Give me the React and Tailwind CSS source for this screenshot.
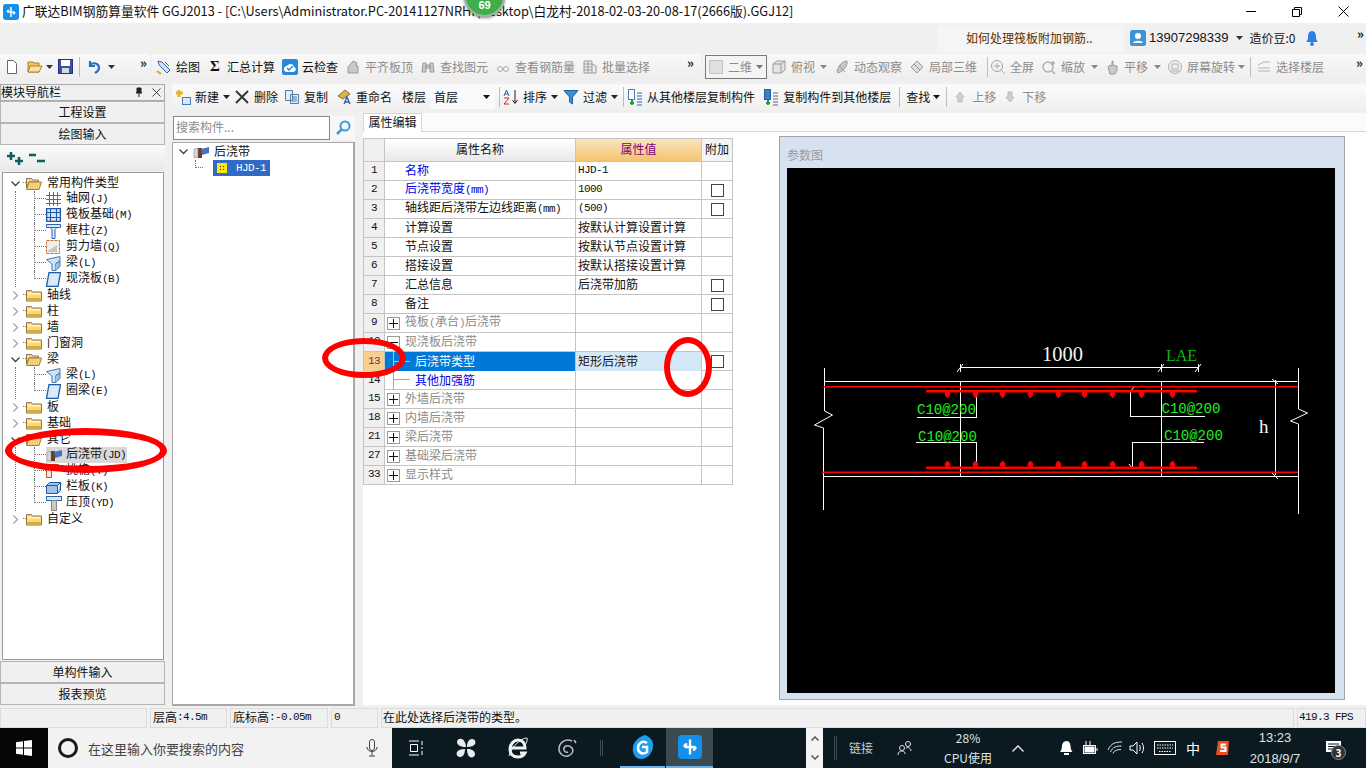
import React from 'react';

const cjk = "font-['Noto_Sans_CJK_SC','Liberation_Sans',sans-serif]";
const M = ({ children }) => <span className="font-['Liberation_Mono',monospace] text-[11px] tracking-[-0.6px]">{children}</span>;

const Arrow = ({ c = 'text-[#333]' }) => (
  <svg width="7" height="4" viewBox="0 0 7 4" className={c}><path d="M0 0h7L3.5 4z" fill="currentColor" /></svg>
);
const Gray = ({ d, fill = '#c8c8c8', stroke = '#9a9a9a' }) => (
  <svg width="16" height="16" viewBox="0 0 16 16"><path d={d} fill={fill} stroke={stroke} /></svg>
);
const ico = {
  cube: <Gray d="M2 5l4-3h8v9l-4 3H2zM2 5h8v9M10 5l4-3" fill="#e4e4e4" />,
  orbit: <Gray d="M3 12C5 6 9 2 13 2c1 4-3 10-9 12zM5 6l6 7" />,
  part: <Gray d="M2 8l6-6 6 6-6 6zM5 5l6 6M8 2l6 6" fill="#ddd" />,
  zoomAll: <svg width="16" height="16" viewBox="0 0 16 16" fill="none" stroke="#a5a5a5"><circle cx="7" cy="7" r="5.5" /><path d="M7 4v6M4 7h6M11 11l4 4" /></svg>,
  zoom: <svg width="16" height="16" viewBox="0 0 16 16" fill="none" stroke="#b0b0b0" strokeWidth="1.5"><circle cx="7" cy="8" r="5" /><path d="M11 12l3 3M12 2v4M10 4h4" /></svg>,
  pan: <Gray d="M4 8c1-2 3-2 4-1V2h1v4l4 1v4l-2 4H6z" />,
  rot: <svg width="16" height="16" viewBox="0 0 16 16" fill="#eee" stroke="#b0b0b0"><circle cx="8" cy="8" r="6.5" /><path d="M3 12h10M5 5h6v5H5z" /></svg>,
  floor: <Gray d="M2 6l6-3 6 0M2 9h12M2 12h12" fill="none" stroke="#b5b5b5" />,
  flush: <Gray d="M3 14V8l5-6 4 2-1 3h2v7z" />,
  find: <Gray d="M3 4h3v9H2zM10 4h3l1 9h-4zM6 6h4v3H6z" />,
  rebar: <svg width="16" height="16" viewBox="0 0 16 16" fill="none" stroke="#aaa"><circle cx="5" cy="10" r="2.5" /><circle cx="11" cy="10" r="2.5" /><path d="M7 10h2" /></svg>,
  batch: <Gray d="M2 2h8v12H2zM2 5h8M2 8h8M2 11h8M6 2v12M10 5l4 2v7h-4" fill="#eee" />,
};

const Tool = ({ icon, label, dis, arrow, className = '' }) => (
  <span className={`flex items-center gap-[4px] flex-none ${dis ? 'text-[#8c8c8c]' : 'text-[#111]'} ${className}`}>
    <span className="w-[16px] h-[16px] flex items-center justify-center flex-none">{icon}</span>
    <span>{label}</span>
    {arrow && <Arrow c={dis ? 'text-[#888]' : 'text-[#222]'} />}
  </span>
);
const Sep = ({ className = '' }) => <span className={`w-px h-[20px] bg-[#bdbdbd] flex-none ${className}`} />;
const More = ({ className = '' }) => <span className={`text-[13px] font-bold leading-none self-start mt-[2px] text-[#222] ${className}`}>»</span>;

const Folder = ({ open }) => (
  <svg width="16" height="13" viewBox="0 0 16 13" className="flex-none">
    {open ? (
      <>
        <path d="M.5 1.5h5l1 1.5h6v2H3L.5 11z" fill="#e9d9a8" stroke="#8b7a4a" />
        <path d="M3 5h12.5L13 12.5H.5z" fill="#f4cf78" stroke="#9b7f3a" />
      </>
    ) : (
      <>
        <path d="M.5 1.5h5l1 1.5h9v9H.5z" fill="#f6d67f" stroke="#8f7a42" />
        <path d="M1.5 4h13v1.500h-13z" fill="#fff6d0" />
        <path d="M1.500 9h13v2.500h-13z" fill="#dba73e" />
      </>
    )}
  </svg>
);
const Chev = ({ open }) => (
  <svg width="9" height="9" viewBox="0 0 9 9" fill="none" stroke={open ? '#444' : '#a6a6a6'} strokeWidth="1.4" className="flex-none">
    {open ? <path d="M.5 2.500L4.500 6.500l4-4" /> : <path d="M2.500.5l4 4-4 4" />}
  </svg>
);
const K = {
  grid: <svg width="15" height="14" viewBox="0 0 15 14" stroke="#3f6fb5" fill="none"><path d="M0 3.500h15M0 7.500h15M0 11.500h15M3.500 0v14M7.500 0v14M11.500 0v14" /></svg>,
  raft: <svg width="15" height="14" viewBox="0 0 15 14" stroke="#1f5aa8" fill="#cfe0f4"><rect x=".5" y=".5" width="14" height="13" strokeWidth="1.500" /><path d="M.5 4.500h14M.5 9.500h14M4.500.5v13M10.500.5v13" /></svg>,
  col: <svg width="15" height="15" viewBox="0 0 15 15" stroke="#2a63b0" fill="#dbe8f8"><path d="M.5.5h14v3h-14zM4 3.500l2 2v9h3v-9l2-2" /></svg>,
  wall: <svg width="15" height="14" viewBox="0 0 15 14"><rect x=".5" y=".5" width="13" height="13" fill="#f1efe9" stroke="#c9703a" strokeDasharray="3 1" /><path d="M2 11l9-6v7H2z" fill="#c9c5bd" /></svg>,
  beam: <svg width="15" height="15" viewBox="0 0 15 15" stroke="#3d78c0" fill="#cfe3f7"><path d="M.5 3.500L14 .5v4L9.500 8v6.500H6V8z" /><path d="M9.500 8L14 4.500v6l-4.500 4" fill="#9cc2ea" /></svg>,
  slab: <svg width="15" height="15" viewBox="0 0 15 15"><path d="M3 .5h11.500L12 14.500H.5z" fill="#dbe9f8" stroke="#1f5aa8" strokeWidth="1.300" /></svg>,
  jd: <svg width="16" height="14" viewBox="0 0 16 14"><path d="M5 3h4v10H5z" fill="#6b3d1e" /><path d="M1 4l4-1v9l-4 1z" fill="#d5d5d5" stroke="#888" strokeWidth=".5" /><path d="M8 4l8-2v6l-7 2z" fill="#4673bf" /></svg>,
  stair: <svg width="14" height="14" viewBox="0 0 14 14" stroke="#b4552a" fill="#f7e5d6"><path d="M.5.5h12v5h-7v8h-5z" /></svg>,
  rail: <svg width="15" height="13" viewBox="0 0 15 13" stroke="#1f5aa8" fill="#9cc4ea"><path d="M.5 4.500h11v8H.5zM.5 4.500l3-3h11l-3 3M11.500 12.500l3-3v-8" /></svg>,
  cap: <svg width="16" height="15" viewBox="0 0 16 15"><rect x=".5" y=".5" width="15" height="4" fill="#dbeafa" stroke="#2a63b0" /><rect x="5.500" y="4.500" width="5" height="10" fill="#c9c9c9" stroke="#888" /></svg>,
};

const Leaf = ({ icon, label, last, sel }) => (
  <div className="flex items-center h-[16px]">
    <span className={`w-[12px] h-[16px] flex-none border-dotted border-[#777] ${last ? '' : 'border-l'}`}>
      <span className={`block h-[8px] border-b border-dotted border-[#777] ${last ? 'border-l' : ''}`} />
    </span>
    <span className={`flex items-center h-[16px] pr-[1px] ${sel ? 'bg-[#d9d9d9]' : ''}`}>
      <span className="w-[20px] flex-none flex items-center">{icon}</span>
      <span className="whitespace-nowrap pb-[2px]">{label}</span>
    </span>
  </div>
);
const Branch = ({ label, open, children }) => (
  <>
    <div className="flex items-center h-[16px]">
      <span className="w-[10px] flex-none flex justify-center"><Chev open={open} /></span>
      <span className="w-[3px] h-[8px] mb-[8px] ml-[3px] flex-none border-b border-dotted border-[#777]" />
      <Folder open={open} />
      <span className="ml-[5px] pb-[2px]">{label}</span>
    </div>
    {children && <div className="ml-[5px] pl-[18px] border-l border-dotted border-[#777]">{children}</div>}
  </>
);

const SideBtn = ({ children }) => (
  <div className="h-[22px] flex items-center justify-center bg-[#f0f0f0] border border-[#b5b5b5] text-[#111] flex-none">{children}</div>
);

const rows = [
  { n: 1, name: '名称', blue: 1, val: <M>HJD-1</M> },
  { n: 2, name: <>后浇带宽度<M>(mm)</M></>, blue: 1, val: <M>1000</M>, c: 1 },
  { n: 3, name: <>轴线距后浇带左边线距离<M>(mm)</M></>, val: <M>(500)</M>, c: 1 },
  { n: 4, name: '计算设置', val: '按默认计算设置计算' },
  { n: 5, name: '节点设置', val: '按默认节点设置计算' },
  { n: 6, name: '搭接设置', val: '按默认搭接设置计算' },
  { n: 7, name: '汇总信息', val: '后浇带加筋', c: 1 },
  { n: 8, name: '备注', val: '', c: 1 },
  { n: 9, name: <>筏板<M>(</M>承台<M>)</M>后浇带</>, plus: '+' },
  { n: 10, name: '现浇板后浇带', plus: '-' },
  { n: 13, name: '后浇带类型', sel: 1, val: '矩形后浇带', c: 1, tree: 1 },
  { n: 14, name: '其他加强筋', blue: 1, tree: 2 },
  { n: 15, name: '外墙后浇带', plus: '+' },
  { n: 18, name: '内墙后浇带', plus: '+' },
  { n: 21, name: '梁后浇带', plus: '+' },
  { n: 27, name: '基础梁后浇带', plus: '+' },
  { n: 33, name: '显示样式', plus: '+' },
];

const Box = ({ s }) => (
  <span className="w-[13px] h-[13px] border border-[#999] bg-white flex items-center justify-center flex-none">
    <svg width="9" height="9" viewBox="0 0 9 9" stroke="#111"><path d={s === '+' ? 'M0 4.500h9M4.500 0v9' : 'M0 4.500h9'} /></svg>
  </span>
);
const Check = () => <span className="block w-[13px] h-[13px] border border-[#444] bg-white mx-auto" />;

const Row = ({ r }) => (
  <div className="grid grid-cols-[21px_191px_126px_31px] h-[19px] border-b border-[#c4c4c4]">
    <div className={`flex items-center justify-center border-r border-[#c4c4c4] pb-[1px] ${r.sel ? 'bg-[#f9cf8f] text-[#7a1f6a]' : 'bg-[#f0f0f0]'}`}><M>{r.n}</M></div>
    <div className={`flex items-center border-r border-[#c4c4c4] ${r.sel ? 'bg-[#0078d7] text-white' : r.blue ? 'text-[#0000e6]' : r.plus ? 'text-[#8c8c8c]' : 'text-[#111]'} ${r.plus ? 'pl-[2px]' : r.tree ? 'pl-[8px]' : 'pl-[20px]'}`}>
      {r.plus && <span className="mr-[5px] flex-none"><Box s={r.plus} /></span>}
      {r.tree && (
        <span className={`w-[22px] h-[19px] flex-none border-l ${r.sel ? 'border-[#9cc8ee]' : 'border-[#aaa]'} ${r.tree === 2 ? 'h-[10px] self-start' : ''}`}>
          <span className={`block border-b ${r.sel ? 'h-[10px] border-[#9cc8ee]' : 'h-[9px] border-[#aaa]'} w-[16px]`} />
        </span>
      )}
      <span className="whitespace-nowrap pb-[2px]">{r.name}</span>
    </div>
    <div className={`flex items-center pl-[2px] pb-[2px] border-r border-[#c4c4c4] whitespace-nowrap ${r.sel ? 'bg-[#d5e8f8]' : ''}`}>{r.val}</div>
    <div className="flex items-center border-r border-[#c4c4c4]">{r.c && <Check />}</div>
  </div>
);

const Dia = () => {
  const tx = [947.5, 975.5, 1002.7, 1030.4, 1058.4, 1084.5, 1112.5, 1141.6, 1172.5];
  const g = "'Liberation Mono',monospace";
  return (
    <svg viewBox="787 168 548 525" width="548" height="525" className="block">
      <g stroke="#fff" fill="none" strokeWidth="1" shapeRendering="crispEdges">
        <path d="M824.500 368V411l8 4-18 10 9 3V510" shapeRendering="auto" />
        <path d="M1298.500 368V409l9 4-17 8 8 3V514" shapeRendering="auto" />
        <path d="M824 381.500H1297M824 476.500H1298M960.500 381V476M1161 381V476M1275.500 380V475" />
        <path d="M960 367.500H1198M960.500 364V372M1161 364V372M1198 364V372" />
        <path d="M976.500 394V417.500H917M916 442.500H976.500V465M1130.500 392V416.500H1205M1204 442.500H1132.500V468" />
      </g>
      <g stroke="#fff" strokeWidth="1" fill="none">
        <path d="M957 372l6-8M1158 372l6-8M1195 372l6-8M1272 379l6 5M1272 473l6 6M1130 392l4-5M1129 464l4 5" />
      </g>
      <g fill="#f00" stroke="none">
        <rect x="824" y="386" width="474" height="1.500" />
        <rect x="822" y="471.500" width="476" height="1.500" />
        <rect x="926" y="390" width="271" height="2.500" />
        <rect x="926" y="466.500" width="271" height="2.500" />
        {tx.map((x) => <g key={x}><circle cx={x} cy="394" r="2.800" /><rect x={x - 1} y="390" width="2" height="8" /></g>)}
        {tx.map((x) => <g key={x + 'b'}><circle cx={x} cy="464.500" r="2.800" /><rect x={x - 1} y="461" width="2" height="8" /></g>)}
      </g>
      <g fontFamily={g} fontSize="14" fill="#1ff01f">
        <text x="917" y="414">C10@200</text>
        <text x="918" y="441">C10@200</text>
        <text x="1161.500" y="413">C10@200</text>
        <text x="1164" y="440">C10@200</text>
      </g>
      <text x="1042" y="361" fontFamily="'Liberation Serif',serif" fontSize="20.500" fill="#f4f4f4">1000</text>
      <text x="1166" y="361" fontFamily="'Liberation Serif',serif" fontSize="16" fill="#0fb80f">LAE</text>
      <text x="1259" y="433" fontFamily="'Liberation Serif',serif" fontSize="19" fill="#f4f4f4">h</text>
    </svg>
  );
};

const Task = ({ children, className = '' }) => <span className={`flex items-center justify-center flex-none ${className}`}>{children}</span>;
const Glodon = ({ size = 26 }) => (
  <svg width={size} height={size} viewBox="0 0 26 26">
    <rect width="26" height="26" rx="4" fill="#1590ea" />
    <path d="M13 5v16M7 13h12M7 13a3 3 0 0 1 3-3M19 13a3 3 0 0 1-3 3" stroke="#fff" strokeWidth="2.500" fill="none" />
  </svg>
);

export default function App() {
  return (
    <div className={`relative w-[1366px] h-[768px] overflow-hidden flex flex-col bg-[#f0f0f0] text-[12px] leading-none text-[#111] ${cjk}`}>
      {/* title bar */}
      <div className="h-[23px] flex-none bg-white flex items-center pl-[3px]">
        <Glodon size={16} />
        <span className="ml-[3px] text-[12.75px] whitespace-nowrap">广联达BIM钢筋算量软件 GGJ2013 - [C:\Users\Administrator.PC-20141127NRHI\Desktop\白龙村-2018-02-03-20-08-17(2666版).GGJ12]</span>
        <span className="ml-auto flex items-center">
          <span className="w-[46px] flex justify-center"><span className="w-[10px] h-px bg-black" /></span>
          <span className="w-[46px] flex justify-center">
            <svg width="10" height="10" viewBox="0 0 10 10" fill="none" stroke="#000"><path d="M.5 2.500h7v7h-7zM2.500 2.500v-2h7v7h-2" /></svg>
          </span>
          <span className="w-[46px] flex justify-center">
            <svg width="11" height="11" viewBox="0 0 11 11" stroke="#000"><path d="M.5.5l10 10M10.500.5l-10 10" /></svg>
          </span>
        </span>
      </div>

      {/* help strip */}
      <div className="h-[31px] flex-none flex items-center">
        <div className="ml-[937px] w-[187px] h-[28px] bg-[#f5f5f5] rounded-t-[3px] flex items-center pl-[29px] pb-[2px] text-[#5a3000] whitespace-nowrap">如何处理筏板附加钢筋..</div>
        <div className="ml-[6px] flex items-center pb-[2px]">
          <svg width="16" height="16" viewBox="0 0 16 16"><rect width="16" height="16" rx="2.500" fill="#3d93d6" /><circle cx="8" cy="6" r="3" fill="#fff" /><path d="M3 13c1-3 9-3 10 0z" fill="#fff" /></svg>
          <span className="ml-[3px] text-[13px] font-['Liberation_Sans',sans-serif]">13907298339</span>
          <span className="ml-[7px]"><Arrow /></span>
          <span className="ml-[7px]">造价豆:0</span>
          <svg width="14" height="16" viewBox="0 0 14 16" className="ml-[9px]"><path d="M7 1c3 0 4 3 4 6s1 4 2 5H1c1-1 2-2 2-5s1-6 4-6z" fill="#2d7fe0" /><circle cx="7" cy="14" r="2" fill="#2d7fe0" /></svg>
        </div>
        <span className="ml-auto mr-[2px] mb-[10px] text-[13px] font-bold">»</span>
      </div>

      {/* main toolbar */}
      <div className="h-[27px] flex-none flex items-center gap-[2px]">
        <div className="w-[150px] h-full rounded-[3px] bg-gradient-to-b from-[#f9f9f9] to-[#ededed] flex items-center pl-[5px] pb-[2px]">
          <svg width="14" height="16" viewBox="0 0 14 16"><path d="M2.500 1.500h6l3 3v10h-9z" fill="#fff" stroke="#666" /></svg>
          <svg width="16" height="15" viewBox="0 0 16 15" className="ml-[8px]"><path d="M1 3h5l1 1h5v9H1z" fill="#f3c55c" stroke="#a5802c" /><path d="M3 7h12l-3 6H1z" fill="#fbe29d" stroke="#a5802c" /></svg>
          <span className="ml-[3px]"><Arrow /></span>
          <svg width="15" height="15" viewBox="0 0 15 15" className="ml-[5px]"><rect x=".5" y=".5" width="14" height="14" fill="#3d4fa8" stroke="#223080" /><rect x="3" y="1" width="9" height="6" fill="#fff" /><rect x="4" y="9" width="7" height="5" fill="#cdd" /></svg>
          <Sep className="ml-[6px]" />
          <svg width="15" height="15" viewBox="0 0 15 15" fill="none" stroke="#2a6fc5" strokeWidth="2.200" className="ml-[7px]"><path d="M3 2v5h5M3 6c3-3 9-2 9 3 0 2-2 4-4 5" /></svg>
          <span className="ml-[6px]"><Arrow /></span>
          <More className="ml-[25px]" />
        </div>
        <div className="w-[549px] h-full rounded-[3px] bg-gradient-to-b from-[#f9f9f9] to-[#ededed] flex items-center pl-[4px] gap-[7px] pb-[2px]">
          <Tool label="绘图" icon={<svg width="16" height="16" viewBox="0 0 16 16" fill="#cfe0f2" stroke="#3a67a8"><path d="M2 2l4 1 8 8-3 3-8-8zM9 3l4 4" /><path d="M1 12l4 3" stroke="#e2a431" strokeWidth="2" /></svg>} />
          <Tool label="汇总计算" icon={<span className="font-['Liberation_Serif',serif] font-bold text-[15px]">Σ</span>} />
          <Tool label="云检查" icon={<svg width="16" height="16" viewBox="0 0 16 16"><rect width="16" height="16" rx="2" fill="#2a87d8" /><path d="M2 10c0-3 3-3 4-4 2-2 6-1 6 2 3 1 2 5-1 5H5c-2 0-3-1-3-3z" fill="#fff" /><path d="M5 9l2 2 4-4" stroke="#2a87d8" strokeWidth="1.500" fill="none" /></svg>} />
          <Tool dis label="平齐板顶" icon={ico.flush} />
          <Tool dis label="查找图元" icon={ico.find} />
          <Tool dis label="查看钢筋量" icon={ico.rebar} />
          <Tool dis label="批量选择" icon={ico.batch} />
          <More className="ml-[30px]" />
        </div>
        <div className="flex-1 h-full rounded-[3px] bg-gradient-to-b from-[#f9f9f9] to-[#ededed] flex items-center pl-[2px] pb-[2px]">
          <span className="w-[62px] h-[24px] border border-[#777] bg-[#f4f4f4] flex items-center text-[#8c8c8c] flex-none">
            <span className="ml-[3px] w-[14px] h-[14px] bg-[#e0e0e0] border border-[#c2c2c2]" />
            <span className="ml-[5px]">二维</span>
            <span className="ml-auto mr-[3px]"><Arrow c="text-[#777]" /></span>
          </span>
          <Tool dis className="ml-[4px]" label="俯视" icon={ico.cube} />
          <span className="ml-[5px]"><Arrow c="text-[#888]" /></span>
          <Tool dis className="ml-[7px]" label="动态观察" icon={ico.orbit} />
          <Tool dis className="ml-[7px]" label="局部三维" icon={ico.part} />
          <Sep className="ml-[10px]" />
          <Tool dis className="ml-[2px]" label="全屏" icon={ico.zoomAll} />
          <Tool dis className="ml-[7px]" label="缩放" icon={ico.zoom} />
          <span className="ml-[6px]"><Arrow c="text-[#888]" /></span>
          <Tool dis className="ml-[6px]" label="平移" icon={ico.pan} />
          <span className="ml-[6px]"><Arrow c="text-[#888]" /></span>
          <Tool dis className="ml-[6px]" label="屏幕旋转" icon={ico.rot} />
          <span className="ml-[3px]"><Arrow c="text-[#888]" /></span>
          <Sep className="ml-[5px]" />
          <Tool dis className="ml-[5px]" label="选择楼层" icon={ico.floor} />
          <More className="ml-auto mr-[3px]" />
        </div>
      </div>

      {/* body */}
      <div className="mt-[3px] h-[622px] flex-none flex">
        {/* module nav */}
        <div className="w-[165px] flex-none flex flex-col pb-[1px]">
          <div className="h-[17px] flex items-center border border-[#aaa] bg-[#efefef] flex-none pb-[1px]">
            <span>模块导航栏</span>
            <svg width="8" height="10" viewBox="0 0 8 10" className="ml-[74px]"><path d="M2 1h4v4l1 1H1l1-1zM4 6v4" fill="#222" stroke="#222" /></svg>
            <svg width="9" height="9" viewBox="0 0 9 9" stroke="#444" className="ml-[9px]"><path d="M.5.5l8 8M8.500.5l-8 8" /></svg>
          </div>
          <SideBtn>工程设置</SideBtn>
          <SideBtn>绘图输入</SideBtn>
          <div className="h-[26px] flex-none flex items-center pl-[7px] gap-[6px] bg-gradient-to-b from-[#fafafa] to-[#e9e9e9]">
            <svg width="16" height="14" viewBox="0 0 16 14" stroke="#0a5f58" strokeWidth="2.500"><path d="M0 5h8M4 1v8M8 10h8M12 6v8" /></svg>
            <svg width="16" height="12" viewBox="0 0 16 12" stroke="#0a5f58" strokeWidth="2.500"><path d="M0 3h7M8 9h8" /></svg>
          </div>
          <div className="flex-1 ml-[2px] mr-[1px] mt-px bg-white border border-[#9a9a9a] pt-[2px] pl-[7px] overflow-hidden">
            <Branch open label="常用构件类型">
              <Leaf icon={K.grid} label={<>轴网<M>(J)</M></>} />
              <Leaf icon={K.raft} label={<>筏板基础<M>(M)</M></>} />
              <Leaf icon={K.col} label={<>框柱<M>(Z)</M></>} />
              <Leaf icon={K.wall} label={<>剪力墙<M>(Q)</M></>} />
              <Leaf icon={K.beam} label={<>梁<M>(L)</M></>} />
              <Leaf last icon={K.slab} label={<>现浇板<M>(B)</M></>} />
            </Branch>
            <Branch label="轴线" />
            <Branch label="柱" />
            <Branch label="墙" />
            <Branch label="门窗洞" />
            <Branch open label="梁">
              <Leaf icon={K.beam} label={<>梁<M>(L)</M></>} />
              <Leaf last icon={K.slab} label={<>圈梁<M>(E)</M></>} />
            </Branch>
            <Branch label="板" />
            <Branch label="基础" />
            <Branch open label="其它">
              <Leaf sel icon={K.jd} label={<>后浇带<M>(JD)</M></>} />
              <Leaf icon={K.stair} label={<>挑檐<M>(T)</M></>} />
              <Leaf icon={K.rail} label={<>栏板<M>(K)</M></>} />
              <Leaf last icon={K.cap} label={<>压顶<M>(YD)</M></>} />
            </Branch>
            <Branch label="自定义" />
          </div>
          <div className="mt-px"><SideBtn>单构件输入</SideBtn></div>
          <SideBtn>报表预览</SideBtn>
        </div>

        <div className="ml-[7px] flex-1 min-w-0 flex flex-col">
          {/* secondary toolbar */}
          <div className="h-[28px] flex-none rounded-[3px] bg-gradient-to-b from-[#fbfbfb] to-[#efefef] flex items-center pl-[3px] pb-[2px]">
            <Tool label="新建" arrow icon={<svg width="16" height="16" viewBox="0 0 16 16"><path d="M4 1v7M1 4h7" stroke="#e2b32f" strokeWidth="3" /><rect x="7.500" y="8.500" width="8" height="7" fill="#dde9f7" stroke="#4a7cbd" /></svg>} />
            <Tool className="ml-[4px]" label="删除" icon={<svg width="14" height="14" viewBox="0 0 14 14" stroke="#333" strokeWidth="1.800"><path d="M1 1l12 12M13 1L1 13" /></svg>} />
            <Tool className="ml-[6px]" label="复制" icon={<svg width="16" height="16" viewBox="0 0 16 16" fill="#e4eefa" stroke="#5579a8"><path d="M1.500 1.500h7v10h-7zM6.500 5.500h8v9h-8zM8 8h5M8 10h5M8 12h5" /></svg>} />
            <Tool className="ml-[8px]" label="重命名" icon={<svg width="16" height="16" viewBox="0 0 16 16"><path d="M2 7l7-6 5 4-7 5z" fill="#d8b24a" stroke="#8a6f20" /><path d="M8 15l3-7 3 7M9 13h4" stroke="#2a5ea8" strokeWidth="1.300" fill="none" /></svg>} />
            <span className="ml-[10px]">楼层</span>
            <span className="ml-[4px] w-[65px] h-[24px] bg-[#fafafa] flex items-center pl-[4px] flex-none">首层<span className="ml-auto mr-[5px]"><Arrow c="text-[#111]" /></span></span>
            <Sep className="ml-[4px]" />
            <Tool className="ml-[3px]" label="排序" arrow icon={<svg width="16" height="16" viewBox="0 0 16 16" fill="none"><path d="M1 7l2.500-6L6 7M2 5h3" stroke="#2a5ea8" /><path d="M1 9h5l-5 6h5" stroke="#b5302a" /><path d="M12 1v13M9.500 11l2.500 3.500 2.500-3.500" stroke="#222" /></svg>} />
            <Tool className="ml-[5px]" label="过滤" arrow icon={<svg width="16" height="16" viewBox="0 0 16 16"><path d="M1 1.500h14L9.500 8v7l-3-2V8z" fill="#3f8fd8" stroke="#23609f" /></svg>} />
            <Sep className="ml-[5px]" />
            <Tool className="ml-[3px]" label="从其他楼层复制构件" icon={<svg width="16" height="17" viewBox="0 0 16 17"><rect x="1.500" y=".5" width="6" height="10" fill="#fff" stroke="#4a7cbd" /><path d="M3 14h4M5 11v5" stroke="#1d9c3d" strokeWidth="2" /><path d="M10 4h5M10 7h5M10 10h5M10 13h5M10 16h5" stroke="#2a63b0" /></svg>} />
            <Tool className="ml-[8px]" label="复制构件到其他楼层" icon={<svg width="16" height="17" viewBox="0 0 16 17"><rect x="1.500" y=".5" width="6" height="10" fill="#3f7cc8" stroke="#2a5ea8" /><path d="M3 14h4M5 11v5" stroke="#1d9c3d" strokeWidth="2" /><path d="M10 4h5M10 7h5M10 10h5M10 13h5M10 16h5" stroke="#666" /></svg>} />
            <Sep className="ml-[8px]" />
            <span className="ml-[6px]">查找</span>
            <span className="ml-[3px]"><Arrow c="text-[#111]" /></span>
            <Sep className="ml-[6px]" />
            <Tool dis className="ml-[5px]" label="上移" icon={<svg width="10" height="12" viewBox="0 0 10 12" fill="#cfcfcf" stroke="#bbb"><path d="M5 1l4 5H7v5H3V6H1z" /></svg>} />
            <Tool dis className="ml-[6px]" label="下移" icon={<svg width="10" height="12" viewBox="0 0 10 12" fill="#cfcfcf" stroke="#bbb"><path d="M3 1h4v5h2l-4 5-4-5h2z" /></svg>} />
          </div>

          <div className="flex-1 min-h-0 flex">
            {/* component list */}
            <div className="w-[183px] flex-none flex flex-col pt-[4px]">
              <div className="h-[26px] flex items-start flex-none">
                <span className="w-[157px] h-[24px] border border-[#888] bg-white flex items-center pl-[2px] pb-[2px] text-[#8c8c8c] ml-px">搜索构件...</span>
                <span className="w-[25px] h-[24px] bg-[#f8f8f8] flex items-center justify-center">
                  <svg width="16" height="16" viewBox="0 0 16 16" fill="none" stroke="#3d9be0" strokeWidth="2"><circle cx="10" cy="6" r="4.500" /><path d="M6.500 9.500L2 14" strokeWidth="2.500" /></svg>
                </span>
              </div>
              <div className="flex-1 bg-white border-2 border-[#a8a8a8] border-t-[1px] border-l-[1px] pl-[6px] pb-[1px]">
                <div className="flex items-center h-[17px]">
                  <Chev open />
                  <span className="w-[3px] mx-[1px]" />
                  <span className="w-[21px] flex-none">{K.jd}</span>
                  <span className="pb-[2px]">后浇带</span>
                </div>
                <div className="flex items-center h-[16px] ml-[16px]">
                  <span className="w-[8px] h-[16px] flex-none"><span className="block h-[8px] w-[8px] border-l border-b border-dotted border-[#777]" /></span>
                  <span className="ml-[10px] h-[16px] w-[57px] bg-[#316ac5] text-white flex items-center pl-[4px] gap-[9px]">
                    <svg width="10" height="10" viewBox="0 0 10 10" fill="#ffe600"><rect width="10" height="10" /><path d="M3 3h1v1H3zM6 3h1v1H6zM3 6h1v1H3zM6 6h1v1H6z" fill="#333" /></svg>
                    <M>HJD-1</M>
                  </span>
                </div>
              </div>
            </div>

            {/* property pane */}
            <div className="flex-1 min-w-0 ml-[8px] flex flex-col">
              <div className="h-[20px] flex-none flex items-end pt-px">
                <span className="w-[59px] h-[19px] bg-white border border-b-0 border-[#d6d6d6] flex items-center justify-center pb-[2px]">属性编辑</span>
                <span className="flex-1 h-full border-b border-[#d6d6d6] bg-[#fbfbfb]" />
              </div>
              <div className="flex-1 bg-white flex items-start pt-[6px] mb-[1px]">
                <div className="w-[370px] flex-none border-t border-l border-[#c4c4c4]">
                  <div className="grid grid-cols-[21px_191px_126px_31px] h-[23px] border-b border-[#c4c4c4]">
                    <div className="bg-[#f0f0f0] border-r border-[#c4c4c4]" />
                    <div className="bg-gradient-to-b from-white to-[#e8e8e8] border-r border-[#c4c4c4] flex items-center justify-center pb-[2px]">属性名称</div>
                    <div className="bg-gradient-to-b from-[#fbe5bc] to-[#f4c36c] border-r border-[#c4c4c4] flex items-center justify-center text-[#800080] pb-[2px]">属性值</div>
                    <div className="border-r border-[#c4c4c4] bg-[#f4f4f4] flex items-center justify-center pb-[2px]">附加</div>
                  </div>
                  {rows.map((r) => <Row key={r.n} r={r} />)}
                </div>
                {/* drawing */}
                <div className="ml-[46px] w-[566px] h-[564px] flex-none -mt-[2px] bg-[#d6e2f0] border border-[#a4a4a4] flex flex-col pl-[7px] pt-[12px]">
                  <span className="text-[#9a9a9a] h-[19px]">参数图</span>
                  <div className="w-[548px] h-[525px] bg-black"><Dia /></div>
                </div>
              </div>
            </div>
          </div>
        </div>
      </div>

      {/* status bar */}
      <div className="mt-[2px] h-[20px] flex-none flex gap-[3px] items-stretch text-[#111]">
        <span className="w-[147px] border border-[#dcdcdc]" />
        <span className="w-[77px] border border-[#dcdcdc] flex items-center pl-[2px] pb-[2px]">层高<M>:4.5m</M></span>
        <span className="w-[98px] border border-[#dcdcdc] flex items-center pl-[2px] pb-[2px]">底标高<M>:-0.05m</M></span>
        <span className="w-[47px] border border-[#dcdcdc] flex items-center pl-[2px] pb-[2px]"><M>0</M></span>
        <span className="w-[913px] border border-[#dcdcdc] flex items-center pl-[1px] pb-[2px]">在此处选择后浇带的类型。</span>
        <span className="flex-1 border border-[#dcdcdc] flex items-center pl-[1px] pb-[2px]"><M>419.3 FPS</M></span>
      </div>

      {/* taskbar */}
      <div className="h-[40px] flex-none flex items-stretch bg-[#0a1a20] text-[#dfe4e6]">
        <Task className="w-[48px] bg-[#060606]">
          <svg width="16" height="16" viewBox="0 0 16 16" fill="#fff"><path d="M0 2.200l7-1v6.300H0zM8 1l8-1v7.500H8zM0 8.500h7v6.300l-7-1zM8 8.500h8V16l-8-1.100z" /></svg>
        </Task>
        <div className="w-[344px] bg-[#f2f2f2] flex items-center text-[#444] flex-none">
          <span className="ml-[10px] w-[20px] h-[20px] rounded-full border-[3px] border-[#1a1a1a] flex-none" />
          <span className="ml-[10px] text-[13px]">在这里输入你要搜索的内容</span>
          <svg width="12" height="18" viewBox="0 0 12 18" fill="none" stroke="#444" className="ml-auto mr-[14px]"><rect x="3.500" y=".5" width="5" height="11" rx="2.500" /><path d="M1 8c0 6 10 6 10 0M6 13v4M3 17h6" /></svg>
        </div>
        <Task className="w-[48px]">
          <svg width="16" height="16" viewBox="0 0 16 16" stroke="#fff" fill="none"><path d="M1 1h10M1 15h10M2.500 4.500h7v7h-7zM14 1v4M14 7v2M14 11v4" /></svg>
        </Task>
        <Task className="w-[52px]">
          <svg width="22" height="22" viewBox="0 0 22 22" fill="#e8ecee"><path d="M11 10C6 10 2 8 2 5s3-4 5-3 4 4 4 8zM12 10c0-5 2-8 5-8s4 3 3 5-4 3-8 3zM12 12c5 0 8 2 8 5s-3 4-5 3-3-4-3-8zM10 12c0 5-2 8-5 8s-4-3-3-5 4-3 8-3z" /></svg>
        </Task>
        <Task className="w-[52px]">
          <svg width="22" height="24" viewBox="0 0 22 24" fill="none" stroke="#eef2f3"><path d="M4 12h14c0-5-3-8-7-8S3 8 3 13s3 8 8 8c4 0 6-2 7-4h-5" strokeWidth="3" /><path d="M2 20C5 10 14 2 20 2c1 2-1 6-3 8" strokeWidth="1" /></svg>
        </Task>
        <Task className="w-[46px]">
          <svg width="20" height="20" viewBox="0 0 20 20" fill="none" stroke="#b8c0c4" strokeWidth="1.500"><path d="M15 3C8 0 2 5 2 11c0 5 5 8 9 7s6-5 4-8-7-3-8 0 2 5 4 4" /><path d="M17 2l2 3" /></svg>
        </Task>
        <span className="w-[3px] my-[12px] ml-[10px] border-x border-[#3e4c52] flex-none" />
        <Task className="w-[45px] ml-[17px] border-b-2 border-[#66b3f0]">
          <svg width="24" height="27" viewBox="0 0 24 27" fill="none"><path d="M14 1c5 2 9 6 8 12-1 7-6 12-12 12S1 19 2 13 8 3 14 1z" fill="#1f9ef0" /><path d="M16 9c-4-3-9 0-9 5s5 7 9 4v-5h-5" stroke="#fff" strokeWidth="2.500" /></svg>
        </Task>
        <Task className="w-[47px] ml-[1px] bg-[#3b4a50] border-b-2 border-[#66b3f0]"><Glodon size={24} /></Task>
        <span className="w-[93px] flex-none" />
        <span className="w-[17px] bg-[#f4f4f4] flex flex-col items-center justify-between py-[8px] flex-none">
          <svg width="8" height="5" viewBox="0 0 8 5" fill="none" stroke="#555" strokeWidth="1.500"><path d="M.5 4.500L4 1l3.500 3.500" /></svg>
          <svg width="8" height="5" viewBox="0 0 8 5" fill="none" stroke="#555" strokeWidth="1.500"><path d="M.5.5L4 4 7.500.5" /></svg>
        </span>
        <span className="ml-[11px] w-[3px] my-[8px] border-x border-[#3e4c52] flex-none" />
        <span className="ml-[12px] self-center flex-none text-[#c6cdd0] text-[12px] w-[24px]">链接</span>
        <Task className="ml-[24px] w-[16px]">
          <svg width="16" height="16" viewBox="0 0 16 16" fill="none" stroke="#dfe4e6"><circle cx="5" cy="8" r="2.500" /><path d="M1 15c0-3 2-4 4-4s3 1 3 3" /><circle cx="11" cy="4" r="2.500" /><path d="M9 8c2-1 5 0 5 3" /></svg>
        </Task>
        <div className="ml-[15px] w-[80px] flex-none flex flex-col items-center justify-center gap-[8px] text-[12px]">
          <span>28%</span><span>CPU使用</span>
        </div>
        <Task className="w-[20px]">
          <svg width="12" height="7" viewBox="0 0 12 7" fill="none" stroke="#eee" strokeWidth="1.300"><path d="M.5 6.500L6 1l5.500 5.500" /></svg>
        </Task>
        <Task className="ml-[31px] w-[14px]">
          <svg width="13" height="16" viewBox="0 0 13 16" fill="#fff"><path d="M6.500 1c3 0 4 3 4 5s1 5 2 6H0c1-1 2-4 2-6s1.500-5 4.500-5z" /><rect x="4" y="13" width="5" height="2" /></svg>
        </Task>
        <Task className="ml-[9px] w-[16px]">
          <svg width="16" height="16" viewBox="0 0 16 16" fill="none" stroke="#fff"><rect x="1.500" y="5.500" width="12" height="8" /><rect x="3" y="7" width="9" height="5" fill="#fff" /><path d="M4 1v4M8 1v4M15 8v3" /></svg>
        </Task>
        <Task className="ml-[9px] w-[16px]">
          <svg width="16" height="14" viewBox="0 0 16 14" fill="none" stroke="#dfe4e6"><path d="M1 9c3-7 8-8 14-8M3.500 11c2-5 6-6 11-6M6 12.500c1-3 4-4 8-4" /></svg>
        </Task>
        <Task className="ml-[5px] w-[16px]">
          <svg width="15" height="14" viewBox="0 0 15 14" fill="none" stroke="#fff"><path d="M1 5h3l4-4v12L4 9H1zM10.500 4c1 2 1 4 0 6M13 2c2 3 2 7 0 10" /></svg>
        </Task>
        <Task className="ml-[10px] w-[22px]">
          <svg width="22" height="14" viewBox="0 0 22 14" fill="none" stroke="#fff"><rect x=".5" y=".5" width="21" height="13" /><path d="M3 4h16M3 7h16M5 10.500h12" strokeDasharray="1.500 1" /></svg>
        </Task>
        <span className="ml-[9px] w-[16px] self-center text-center text-[14px] flex-none text-white">中</span>
        <Task className="ml-[13px] w-[16px]">
          <svg width="15" height="16" viewBox="0 0 15 16"><path d="M3 1h11l-1 14H1z" fill="#ee4d1d" /><path d="M11 4.500H6.500v3h4v3.500H5" stroke="#fff" strokeWidth="2" fill="none" /></svg>
        </Task>
        <div className="ml-[7px] w-[76px] flex-none flex flex-col items-center justify-center gap-[8px] text-[13px] font-['Liberation_Sans',sans-serif]">
          <span>13:23</span><span>2018/9/7</span>
        </div>
        <Task className="ml-[10px] w-[20px] relative">
          <svg width="15" height="15" viewBox="0 0 15 15" fill="#fff"><path d="M0 0h15v11H0z" /><path d="M2 3h11M2 5.500h11M2 8h8" stroke="#0a1a20" /></svg>
          <span className="absolute left-[8px] top-[17px] w-[15px] h-[15px] rounded-full bg-[#333] border border-[#888] text-white text-[10px] font-bold flex items-center justify-center">3</span>
        </Task>
      </div>

      {/* overlays */}
      <div className="absolute left-[464px] -top-[24px] w-[41px] h-[41px] rounded-full bg-[#3fae4a] border-2 border-[#9fb5a2] shadow-[0_1px_3px_rgba(0,0,0,0.5)] flex items-end justify-center pb-[4px]">
        <span className="text-white text-[11px] font-bold font-['Liberation_Sans',sans-serif]">69</span>
      </div>
      <div className="absolute left-[322px] top-[338px] w-[84px] h-[40px] rounded-[50%] border-[6px] border-[#f00]" />
      <div className="absolute left-[664px] top-[337px] w-[48px] h-[60px] rounded-[50%] border-[6px] border-[#f00]" />
      <div className="absolute left-[5px] top-[428px] w-[162px] h-[45px] rounded-[50%] border-[7px] border-[#f00]" />
    </div>
  );
}
